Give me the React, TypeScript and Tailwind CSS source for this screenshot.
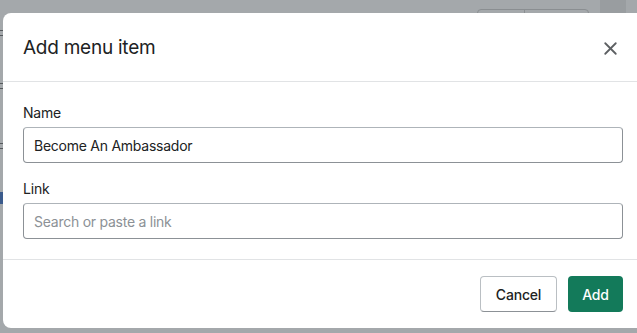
import { X } from 'lucide-react'

export default function App() {
  return (
    <div className="relative w-[637px] h-[333px] overflow-hidden bg-[#a4a8ab]" style={{ fontFamily: 'Inter, "Noto Sans", sans-serif' }}>
      {/* faint page behind the overlay */}
      <div className="absolute left-[477px] top-[9px] w-[112px] h-[30px] rounded-[4px] border border-[#8a8e91] flex">
        <div className="w-[47px] border-r border-[#8a8e91]" />
      </div>
      <div className="absolute left-[600px] top-0 w-[26px] h-[14px] bg-[#999da0]" />
      <div className="absolute left-0 top-[30px] w-[3px] h-[6px] border-y border-[#55595c]" />
      <div className="absolute left-0 top-[83px] w-[3px] h-[6px] border-y border-[#55595c]" />
      <div className="absolute left-0 top-[143px] w-[3px] h-[6px] border-y border-[#55595c]" />
      <div className="absolute left-0 top-[192px] w-[3px] h-[12px] bg-[#3b5b8c]" />

      {/* modal */}
      <div className="absolute left-[3px] top-[13px] w-[640px] h-[315px] bg-white rounded-l-[8px] flex flex-col text-[#202223]">
        <div className="h-[69px] flex items-center justify-between pl-[20px] pr-[22px] pt-[2px] border-b border-[#e1e3e5]">
          <h2 className="text-[19px] leading-[24px] font-normal tracking-[-0.25px]">Add menu item</h2>
          <X className="w-[21px] h-[21px] text-[#5c5f62]" strokeWidth={2.1} />
        </div>

        <div className="px-[20px] pt-[21px] pb-[20px] border-b border-[#e1e3e5] tracking-[-0.2px]">
          <label className="block text-[14px] leading-[20px] mb-[4px]">Name</label>
          <input
            type="text"
            defaultValue="Become An Ambassador"
            className="w-full h-[36px] px-[10px] rounded-[4px] border border-[#8c9196] border-t-[#aeb4b9] text-[14px] tracking-[-0.25px] text-[#202223] outline-none"
          />
          <label className="block text-[14px] leading-[20px] mt-[16px] mb-[4px]">Link</label>
          <input
            type="text"
            placeholder="Search or paste a link"
            className="w-full h-[36px] px-[10px] rounded-[4px] border border-[#8c9196] border-t-[#aeb4b9] text-[14px] tracking-[-0.25px] placeholder:text-[#8c9196] outline-none"
          />
        </div>

        <div className="flex-1 flex items-center justify-end gap-[11px] pr-[20px] tracking-[-0.2px]">
          <button className="h-[36px] w-[77px] rounded-[4px] border border-[#babfc3] border-b-[#8c9196] bg-white text-[14px] font-medium text-[#202223]">
            Cancel
          </button>
          <button className="h-[36px] w-[55px] rounded-[4px] bg-[#137a5a] text-[14px] font-medium text-white">
            Add
          </button>
        </div>
      </div>
    </div>
  )
}
